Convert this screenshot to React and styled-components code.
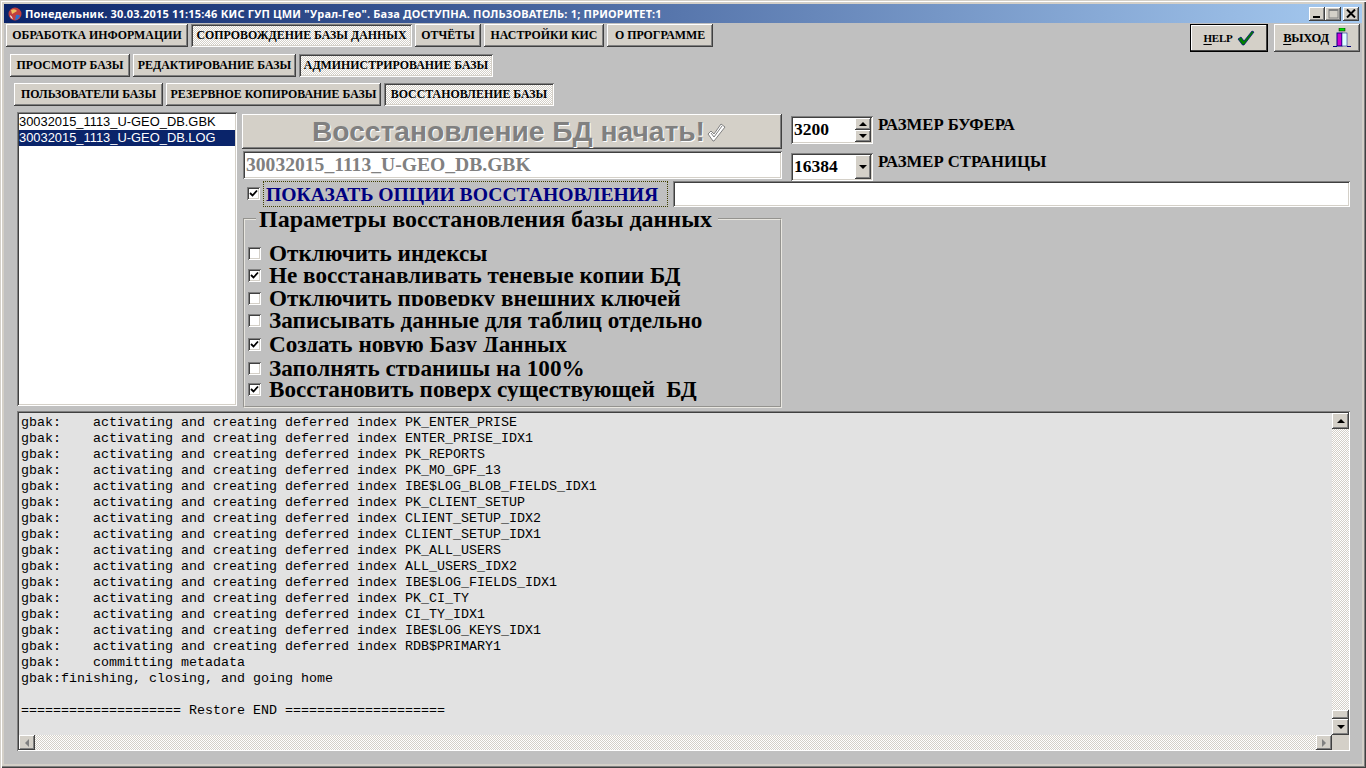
import React from 'react'
import styled, { createGlobalStyle } from 'styled-components'

const GlobalStyle = createGlobalStyle`
  html, body { margin: 0; padding: 0; background: #d4d0c8; overflow: hidden; }
  * { box-sizing: border-box; }
`

const raised = `inset -1px -1px #404040, inset 1px 1px #fff, inset -2px -2px #808080, inset 2px 2px #d4d0c8`
const sunken = `inset 1px 1px #808080, inset -1px -1px #fff, inset 2px 2px #404040, inset -2px -2px #d4d0c8`
const dither = `repeating-conic-gradient(#fff 0 25%, #d4d0c8 0 50%) 0 0 / 2px 2px`

const Window = styled.div`
  width: 1366px;
  height: 768px;
  display: flex;
  flex-direction: column;
  background: #d4d0c8;
  padding: 4px 4px 4px 4px;
  position: relative;
  box-shadow: inset 1px 1px #d4d0c8, inset 2px 2px #fff, inset -1px -1px #404040, inset -2px -2px #808080;
`

const TitleBar = styled.div`
  height: 19px;
  flex: none;
  display: flex;
  align-items: center;
  padding: 0 3px 0 4px;
  background: linear-gradient(90deg, #0a246a, #a6caf0);
`

const TitleText = styled.span`
  margin-left: 3px;
  font: bold 11px "Noto Sans", sans-serif;
  letter-spacing: 0.2px;
  color: #fff;
  white-space: nowrap;
  flex: 1;
`

const WinButton = styled.button`
  width: 16px;
  height: 14px;
  margin-left: ${(p) => p.$gap || 0}px;
  padding: 0;
  border: 0;
  background: #d4d0c8;
  box-shadow: ${raised};
  display: flex;
  align-items: center;
  justify-content: center;
`

const Body = styled.div`
  flex: 1;
  background: #c0c0c0;
  display: flex;
  flex-direction: column;
  min-height: 0;
`

const TabRow = styled.div`
  display: flex;
  align-items: flex-start;
  gap: ${(p) => p.$gap ?? 3}px;
  height: ${(p) => p.$h}px;
  padding-left: ${(p) => p.$left}px;
  padding-top: 1px;
  padding-right: 2px;
`

const Tab = styled.button`
  width: ${(p) => p.$w}px;
  height: ${(p) => p.$h || 23}px;
  padding: 0;
  border: 0;
  flex: none;
  font: bold 11.9px "Liberation Serif", serif;
  color: #000;
  white-space: nowrap;
  background: ${(p) => (p.$active ? dither : '#d4d0c8')};
  box-shadow: ${(p) => (p.$active ? sunken : raised)};
`

const ActionButton = styled.button`
  width: ${(p) => p.$w}px;
  height: 28px;
  margin-left: ${(p) => p.$ml || 0};
  padding: 0;
  flex: none;
  border: 0;
  display: flex;
  align-items: center;
  justify-content: center;
  gap: 4px;
  font: bold 12.5px "Liberation Serif", serif;
  letter-spacing: -0.2px;
  background: #d4d0c8;
  box-shadow: ${(p) => (p.$default ? `inset 0 0 0 1px #000, inset -2px -2px #404040, inset 2px 2px #fff` : raised)};
  u { text-underline-offset: 2px; }
`

const HelpText = styled.span`
  font-size: 11px;
`

const Main = styled.div`
  display: flex;
  gap: 5px;
  padding: 1px 12px 0 13px;
  margin-top: 4px;
  height: 297px;
  flex: none;
`

const FileList = styled.div`
  width: 220px;
  height: 294px;
  flex: none;
  padding: 2px;
  background: #fff;
  box-shadow: ${sunken};
`

const FileItem = styled.div`
  height: 16px;
  padding-left: 0;
  font: 12.9px/16px "Liberation Sans", sans-serif;
  color: ${(p) => (p.$selected ? '#fff' : '#000')};
  background: ${(p) => (p.$selected ? '#0a246a' : 'transparent')};
  white-space: nowrap;
`

const RightColumn = styled.div`
  flex: 1;
  min-width: 0;
  display: flex;
  flex-direction: column;
`

const TopRow = styled.div`
  display: flex;
  gap: 9px;
`

const StartColumn = styled.div`
  width: 540px;
  flex: none;
  display: flex;
  flex-direction: column;
  padding-top: 2px;
  gap: 2px;
`

const StartButton = styled.button`
  height: 35px;
  width: 540px;
  padding: 0 0 0 14px;
  border: 0;
  background: #d4d0c8;
  box-shadow: ${raised};
  display: flex;
  align-items: center;
  justify-content: center;
  font: bold 28.2px "Liberation Sans", sans-serif;
  color: #808080;
  text-shadow: 1px 1px 0 #fff;
  gap: 1px;
  white-space: nowrap;
`

const FileField = styled.div`
  height: 28px;
  margin-left: 1px;
  padding-left: 3px;
  background: #fff;
  box-shadow: ${sunken};
  font: bold 19.6px/27px "Liberation Serif", serif;
  color: #808080;
`

const SideColumn = styled.div`
  display: flex;
  flex-direction: column;
  padding-top: 4px;
  gap: 9px;
`

const SideRow = styled.div`
  display: flex;
  align-items: flex-start;
  gap: 5px;
`

const SideLabel = styled.span`
  font: bold 16.7px/18px "Liberation Serif", serif;
  color: #000;
  white-space: nowrap;
`

const NumberBox = styled.div`
  width: ${(p) => p.$w}px;
  height: 28px;
  flex: none;
  display: flex;
  align-items: stretch;
  padding: 2px;
  background: #fff;
  box-shadow: ${sunken};
`

const NumberValue = styled.span`
  flex: 1;
  padding-left: 1px;
  font: bold 17.5px/22px "Liberation Serif", serif;
  color: #000;
`

const SpinColumn = styled.div`
  width: 16px;
  display: flex;
  flex-direction: column;
`

const ArrowButton = styled.div`
  flex: 1;
  background: #d4d0c8;
  box-shadow: ${raised};
  display: flex;
  align-items: center;
  justify-content: center;
`

const Arrow = styled.i`
  display: block;
  width: 0;
  height: 0;
  border-left: ${(p) => p.$s}px solid transparent;
  border-right: ${(p) => p.$s}px solid transparent;
  ${(p) => (p.$up ? 'border-bottom' : 'border-top')}: ${(p) => p.$s}px solid #000;
`

const SideArrow = styled.i`
  display: block;
  width: 0;
  height: 0;
  border-top: 4px solid transparent;
  border-bottom: 4px solid transparent;
  ${(p) => (p.$left ? 'border-right' : 'border-left')}: 4px solid #808080;
`

const OptionsRow = styled.div`
  display: flex;
  align-items: center;
  height: 28px;
  margin-top: -1px;
  padding-left: 5px;
`

const Check = styled.span`
  width: 13px;
  height: 13px;
  flex: none;
  background: #fff;
  box-shadow: ${sunken};
  display: flex;
  align-items: center;
  justify-content: center;
  svg { display: block; }
`

const ShowLabel = styled.span`
  margin-left: 3px;
  width: 405px;
  height: 26px;
  padding-left: 2px;
  border: 1px dotted #404000;
  font: bold 19.65px/24px "Liberation Serif", serif;
  color: #000080;
  white-space: nowrap;
`

const NoteField = styled.div`
  flex: 1;
  height: 26px;
  margin-left: 5px;
  background: #fff;
  box-shadow: ${sunken};
`

const Group = styled.fieldset`
  width: 539px;
  height: 202px;
  margin: 1px 0 0 1px;
  padding: 12px 0 0 3px;
  border: 2px groove #e8e6e0;
  min-width: 0;
`

const GroupTitle = styled.legend`
  margin-left: 8px;
  padding: 0 6px 0 3px;
  font: bold 24px/20px "Liberation Serif", serif;
  color: #000;
  white-space: nowrap;
`

const OptionRow = styled.div`
  display: flex;
  align-items: flex-start;
  height: ${(p) => p.$h}px;
  margin-bottom: ${(p) => p.$after || 0}px;
  overflow: hidden;
`

const OptionCheck = styled(Check)`
  margin-top: 6px;
`

const OptionText = styled.span`
  margin-left: 8px;
  font: bold 23.2px/24px "Liberation Serif", serif;
  color: #000;
  white-space: pre;
`

const LogPanel = styled.div`
  width: 1333px;
  height: 340px;
  margin: 3px 0 0 13px;
  flex: none;
  padding: 2px 1px 1px 2px;
  background: #e2e2e2;
  box-shadow: ${sunken};
  display: grid;
  grid-template-columns: 1fr 17px;
  grid-template-rows: 1fr 15px;
`

const LogText = styled.pre`
  margin: 0;
  padding: 2px 0 0 2px;
  overflow: hidden;
  font: 13.33px/16px "Liberation Mono", monospace;
  color: #000;
`

const VScroll = styled.div`
  display: flex;
  flex-direction: column;
  background: ${dither};
`

const HScroll = styled.div`
  display: flex;
  justify-content: space-between;
  background: ${dither};
`

const ScrollButton = styled.div`
  width: ${(p) => p.$w || 17}px;
  height: ${(p) => p.$h || 16}px;
  flex: none;
  margin-top: ${(p) => p.$mt || 0};
  background: #d4d0c8;
  box-shadow: ${raised};
  display: flex;
  align-items: center;
  justify-content: center;
`

const Corner = styled.div`
  background: #d4d0c8;
`

const AppIcon = () => (
  <svg width="14" height="14" viewBox="0 0 14 14">
    <circle cx="7" cy="7" r="6.5" fill="#c04040" />
    <path d="M3 3 Q7 1 9 4 Q6 6 4 7 Z" fill="#f0c060" />
    <path d="M8 8 Q11 7 12 9 Q10 13 7 13 Z" fill="#3070d0" />
    <path d="M2 8 Q4 9 5 12 Q2 11 2 8 Z" fill="#e8e8f0" />
  </svg>
)

const CheckMark = () => (
  <svg width="9" height="9" viewBox="0 0 9 9">
    <path d="M1 4 L3.5 6.5 L8 1.5" fill="none" stroke="#000" strokeWidth="1.8" />
  </svg>
)

const GreenCheck = () => (
  <svg width="18" height="16" viewBox="0 0 18 16">
    <path d="M1 9 L4 7 L7 11 L15 1 L17 2 L7 15 L5.5 15 Z" fill="#008000" stroke="#000080" strokeWidth="0.7" />
  </svg>
)

const GhostCheck = () => (
  <svg width="20" height="20" viewBox="0 0 20 20">
    <path d="M2 12 L5 9 L8 12 L15 2 L19 5 L8 19 L7 19 Z" fill="#fff" stroke="#808080" />
    <path d="M5 11 L8 15 L16 4" fill="none" stroke="#808080" />
  </svg>
)

const ExitIcon = () => (
  <svg width="18" height="20" viewBox="0 0 18 20">
    <rect x="6" y="0" width="6" height="3" fill="#00e000" stroke="#000" strokeWidth="0.5" />
    <rect x="4" y="5" width="5" height="13" fill="#d000d0" stroke="#000080" />
    <rect x="9" y="5" width="5" height="13" fill="#e0ffff" stroke="#000080" strokeWidth="0.5" />
    <path d="M0 18.5 H4 M14 18.5 H18" stroke="#000080" />
  </svg>
)

const CloseGlyph = () => (
  <svg width="10" height="9" viewBox="0 0 10 9">
    <path d="M1 0.5 L9 8.5 M9 0.5 L1 8.5" stroke="#000" strokeWidth="2" />
  </svg>
)

const MinGlyph = () => (
  <svg width="10" height="9" viewBox="0 0 10 9">
    <rect x="1" y="7" width="7" height="2" fill="#000" />
  </svg>
)

const MaxGlyph = () => (
  <svg width="11" height="10" viewBox="0 0 11 10">
    <rect x="1" y="0.5" width="9" height="8.5" fill="none" stroke="#808080" />
    <rect x="1" y="1" width="9" height="1" fill="#808080" />
  </svg>
)

const options = [
  { text: 'Отключить индексы', h: 22 },
  { text: 'Не восстанавливать теневые копии БД', h: 23, on: true },
  { text: 'Отключить проверку внешних ключей', h: 20, after: 2 },
  { text: 'Записывать данные для таблиц отдельно', h: 24 },
  { text: 'Создать новую Базу Данных', h: 20, after: 4, on: true },
  { text: 'Заполнять страницы на 100%', h: 20, after: 1 },
  { text: 'Восстановить поверх существующей  БД', h: 24, on: true },
]

const indexes = [
  'PK_ENTER_PRISE', 'ENTER_PRISE_IDX1', 'PK_REPORTS', 'PK_MO_GPF_13', 'IBE$LOG_BLOB_FIELDS_IDX1',
  'PK_CLIENT_SETUP', 'CLIENT_SETUP_IDX2', 'CLIENT_SETUP_IDX1', 'PK_ALL_USERS', 'ALL_USERS_IDX2',
  'IBE$LOG_FIELDS_IDX1', 'PK_CI_TY', 'CI_TY_IDX1', 'IBE$LOG_KEYS_IDX1', 'RDB$PRIMARY1',
]

const logText = [
  ...indexes.map((name) => `gbak:    activating and creating deferred index ${name}`),
  'gbak:    committing metadata',
  'gbak:finishing, closing, and going home',
  '',
  '==================== Restore END ====================',
].join('\n')

export default function App() {
  return (
    <Window>
      <GlobalStyle />
      <TitleBar>
        <AppIcon />
        <TitleText>Понедельник. 30.03.2015 11:15:46 КИС ГУП ЦМИ "Урал-Гео". База ДОСТУПНА. ПОЛЬЗОВАТЕЛЬ: 1; ПРИОРИТЕТ:1</TitleText>
        <WinButton><MinGlyph /></WinButton>
        <WinButton><MaxGlyph /></WinButton>
        <WinButton $gap={2}><CloseGlyph /></WinButton>
      </TitleBar>
      <Body>
        <TabRow $h={30} $left={2}>
          <Tab $w={182}>ОБРАБОТКА ИНФОРМАЦИИ</Tab>
          <Tab $w={221} $active>СОПРОВОЖДЕНИЕ БАЗЫ ДАННЫХ</Tab>
          <Tab $w={66}>ОТЧЁТЫ</Tab>
          <Tab $w={120}>НАСТРОЙКИ КИС</Tab>
          <Tab $w={106}>О ПРОГРАММЕ</Tab>
          <ActionButton $w={78} $ml="auto" $default><HelpText><u>H</u>ELP</HelpText><GreenCheck /></ActionButton>
          <ActionButton $w={86} $ml="3px"><span><u>В</u>ЫХОД</span><ExitIcon /></ActionButton>
        </TabRow>
        <TabRow $h={29} $left={6}>
          <Tab $w={120}>ПРОСМОТР БАЗЫ</Tab>
          <Tab $w={163}>РЕДАКТИРОВАНИЕ БАЗЫ</Tab>
          <Tab $w={194} $active>АДМИНИСТРИРОВАНИЕ БАЗЫ</Tab>
        </TabRow>
        <TabRow $h={25} $left={10}>
          <Tab $w={149}>ПОЛЬЗОВАТЕЛИ БАЗЫ</Tab>
          <Tab $w={215}>РЕЗЕРВНОЕ КОПИРОВАНИЕ БАЗЫ</Tab>
          <Tab $w={170} $active>ВОССТАНОВЛЕНИЕ БАЗЫ</Tab>
        </TabRow>
        <Main>
          <FileList>
            <FileItem>30032015_1113_U-GEO_DB.GBK</FileItem>
            <FileItem $selected>30032015_1113_U-GEO_DB.LOG</FileItem>
          </FileList>
          <RightColumn>
            <TopRow>
              <StartColumn>
                <StartButton>Восстановление БД начать!<GhostCheck /></StartButton>
                <FileField>30032015_1113_U-GEO_DB.GBK</FileField>
              </StartColumn>
              <SideColumn>
                <SideRow>
                  <NumberBox $w={82}>
                    <NumberValue>3200</NumberValue>
                    <SpinColumn>
                      <ArrowButton><Arrow $s={4} $up /></ArrowButton>
                      <ArrowButton><Arrow $s={4} /></ArrowButton>
                    </SpinColumn>
                  </NumberBox>
                  <SideLabel>РАЗМЕР БУФЕРА</SideLabel>
                </SideRow>
                <SideRow>
                  <NumberBox $w={82}>
                    <NumberValue>16384</NumberValue>
                    <SpinColumn>
                      <ArrowButton><Arrow $s={4} /></ArrowButton>
                    </SpinColumn>
                  </NumberBox>
                  <SideLabel>РАЗМЕР СТРАНИЦЫ</SideLabel>
                </SideRow>
              </SideColumn>
            </TopRow>
            <OptionsRow>
              <Check><CheckMark /></Check>
              <ShowLabel>ПОКАЗАТЬ ОПЦИИ ВОССТАНОВЛЕНИЯ</ShowLabel>
              <NoteField />
            </OptionsRow>
            <Group>
              <GroupTitle>Параметры восстановления базы данных</GroupTitle>
              {options.map((o) => (
                <OptionRow key={o.text} $h={o.h} $after={o.after}>
                  <OptionCheck>{o.on && <CheckMark />}</OptionCheck>
                  <OptionText>{o.text}</OptionText>
                </OptionRow>
              ))}
            </Group>
          </RightColumn>
        </Main>
        <LogPanel>
          <LogText>{logText}</LogText>
          <VScroll>
            <ScrollButton><Arrow $s={4} $up /></ScrollButton>
            <ScrollButton $h={9} $mt="auto" />
            <ScrollButton><Arrow $s={4} /></ScrollButton>
          </VScroll>
          <HScroll>
            <ScrollButton $w={16} $h={15}><SideArrow $left /></ScrollButton>
            <ScrollButton $w={16} $h={15}><SideArrow /></ScrollButton>
          </HScroll>
          <Corner />
        </LogPanel>
      </Body>
    </Window>
  )
}
